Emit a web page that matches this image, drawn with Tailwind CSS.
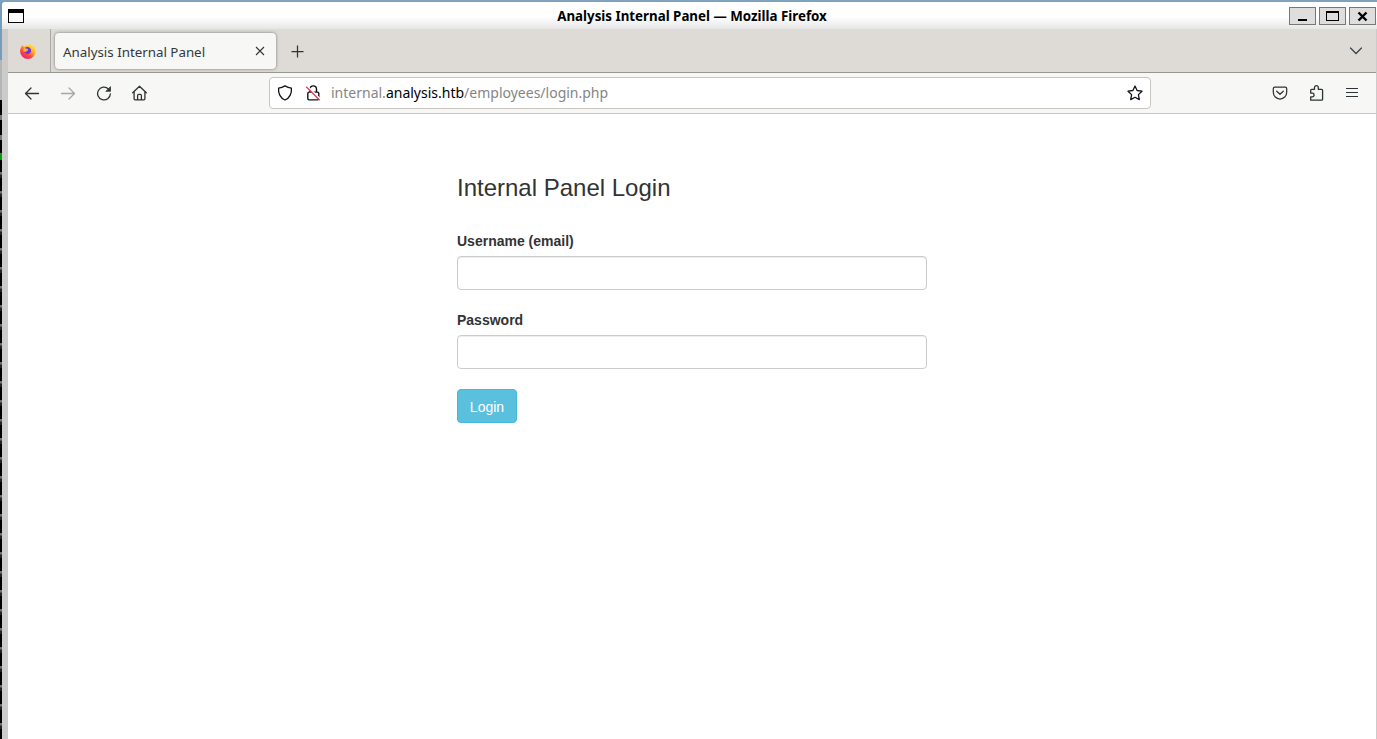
<!DOCTYPE html>
<html lang="en">
<head>
<meta charset="utf-8">
<title>Analysis Internal Panel</title>
<script src="https://cdn.jsdelivr.net/npm/@tailwindcss/browser@4"></script>
</head>
<body class="h-[739px] w-[1377px] overflow-hidden bg-[#7fa3be] pt-[2px] font-['Noto_Sans',sans-serif]">
<div class="flex h-[737px]">
  <!-- desktop and terminal visible beside the window -->
  <aside class="flex w-[2px] shrink-0 flex-col overflow-hidden bg-black">
    <div class="h-[58px] shrink-0 bg-[#759dbb]"></div>
    <div class="h-[40px] shrink-0 bg-[#b5b5b5]"></div>
    <div class="h-[53px] shrink-0 bg-[repeating-linear-gradient(to_bottom,#000_0px,#000_15px,#777_15px,#777_20px)]"></div>
    <div class="h-[7px] shrink-0 bg-[#0b9a0b]"></div>
    <div class="grow bg-[repeating-linear-gradient(to_bottom,#000_0px,#000_12px,#666_12px,#777_14px,#222_15px,#222_18px,#000_18px,#000_19px)]"></div>
  </aside>
  <div class="flex min-w-0 grow flex-col overflow-hidden rounded-tl-[3px] bg-[#cbcbcb]">
    <header class="flex h-[27px] shrink-0 items-center bg-linear-to-b from-white from-55% to-[#e6e6e6] pr-px pl-[6px]">
      <svg class="h-[14px] w-4" viewBox="0 0 16 14"><path d="M0 0h16v14H0z"/><path fill="#fff" d="M1 4h14v9H1z"/></svg>
      <h1 class="grow pt-[2px] pl-[71px] text-center text-[13.333px] leading-[25px] font-bold text-black">Analysis Internal Panel — Mozilla Firefox</h1>
      <div class="flex gap-[3px] pt-px">
        <div class="h-[18px] w-[27px] border border-[#777] bg-[#dedede]"><svg class="h-4 w-[25px]" viewBox="0 0 25 16"><path d="M8 11h9v2H8z"/></svg></div>
        <div class="h-[18px] w-[27px] border border-[#777] bg-[#dedede]"><svg class="h-4 w-[25px]" viewBox="0 0 25 16"><path fill-rule="evenodd" d="M6 3h13v10H6zM7 5v7h11V5z"/></svg></div>
        <div class="h-[18px] w-[27px] border border-[#777] bg-[#dedede]"><svg class="h-4 w-[25px]" viewBox="0 0 25 16"><path d="m8.500 4.500 8 8m0-8-8 8" stroke="#000" stroke-width="2.400"/></svg></div>
      </div>
    </header>
    <div class="mr-px ml-[6px] flex min-h-0 grow flex-col bg-white">
      <div class="flex h-11 shrink-0 border-b border-[#999692] bg-[#dedbd7]">
        <div class="flex w-[43px] items-center border-r border-[#aaa7a3] pl-[11px]">
          <svg class="h-[18px] w-[18px]" viewBox="0 0 18 18">
            <defs>
              <linearGradient id="flame" x1=".85" y1=".05" x2=".2" y2="1"><stop offset="0" stop-color="#fff044"/><stop offset=".35" stop-color="#ffb026"/><stop offset=".65" stop-color="#ff4a3d"/><stop offset="1" stop-color="#e8158b"/></linearGradient>
            </defs>
            <path fill="url(#flame)" d="M2.600 4.500 3.200 3l1.500 1.600 1.500-.2L7.600 2.800l1.200 1.500L11 1.500c1.300 1 2.500 2 3 3.200l.8-.5c1.100 1.500 1.700 3.100 1.700 5A7.700 7.700 0 0 1 1.100 9.400c0-2 .5-3.500 1.500-4.900z"/>
            <path fill="#6c35df" d="M6 6.400C7.500 4.200 10.700 5 11.700 7c1.200 2.700-.5 5-3.200 4.900-1.900 0-3.300-1.300-3.600-2.800l2.600.7 1.700-1.200-1.800-.7z"/>
            <path fill="#ffb52e" d="m5 5.700 1.800.9 2.300.3-.4 1.300-1.700.8-.4 1.200-2.400-1z"/>
          </svg>
        </div>
        <div class="mt-1 ml-1 flex h-9 w-[221px] items-center justify-between rounded bg-[#f7f7f5] pr-[10px] pl-2 shadow-[0_0_3px_rgba(0,0,0,.5)]">
          <span class="pt-[3px] text-[13.333px] text-[#33383a]">Analysis Internal Panel</span>
          <svg class="h-3 w-3" viewBox="0 0 12 12" fill="none" stroke="#33383a" stroke-width="1.100"><path d="m2 2 8 8m0-8-8 8"/></svg>
        </div>
        <svg class="mt-4 ml-[15px] h-[13px] w-[13px]" viewBox="0 0 13 13" fill="none" stroke="#2e3436" stroke-width="1.250"><path d="M6.500 .5v12M.5 6.500h12"/></svg>
        <svg class="mt-[17px] mr-[13px] ml-auto h-[10px] w-[14px]" viewBox="0 0 14 10" fill="none" stroke="#3c4446" stroke-width="1.300" stroke-linecap="round"><path d="m1.500 2 5.500 5.500L12.500 2"/></svg>
      </div>
      <nav class="flex h-[41px] shrink-0 items-center border-b border-[#cbc8c2] bg-[#f7f7f5] text-[#2e3436]">
        <svg class="ml-4 h-4 w-4" viewBox="0 0 16 16" fill="none" stroke="currentColor" stroke-width="1.300" stroke-linecap="round" stroke-linejoin="round"><path d="M14.500 8.500h-13M7 3 1.500 8.500 7 14"/></svg>
        <svg class="ml-5 h-4 w-4 opacity-40" viewBox="0 0 16 16" fill="none" stroke="currentColor" stroke-width="1.300" stroke-linecap="round" stroke-linejoin="round"><path d="M1.500 8.500h13M9 3l5.500 5.500L9 14"/></svg>
        <svg class="ml-5 h-4 w-4" viewBox="0 0 16 16" fill="none" stroke="currentColor" stroke-width="1.300" stroke-linecap="round" stroke-linejoin="round"><path d="M12.300 3.800A6.400 6.400 0 1 0 14.400 8.800"/><path fill="currentColor" d="M14.500 2v4.300h-4.300z" stroke-width=".8"/></svg>
        <svg class="ml-5 h-4 w-4" viewBox="0 0 16 16" fill="none" stroke="currentColor" stroke-width="1.300" stroke-linecap="round" stroke-linejoin="round"><path d="M.7 7.700 7.500 1.200l6.800 6.500M2.100 6.700v7.100q0 1 1 1h8.800q1 0 1-1V6.700M5.600 14.500v-4q0-1.200 1.200-1.200h1.400q1.200 0 1.200 1.200v4"/></svg>
        <div class="ml-[121px] flex h-8 w-[882px] items-center rounded border border-[#c8c5c0] bg-white px-[7px]">
          <svg class="h-4 w-4" viewBox="0 0 16 16" fill="none" stroke="#111" stroke-width="1.300" stroke-linejoin="round"><path d="M8 .9Q11 2.800 14.400 3.100C15 8.300 12.500 13.300 8 15 3.500 13.300 1 8.300 1.600 3.100Q5 2.800 8 .9z"/></svg>
          <svg class="ml-3 h-4 w-4" viewBox="0 0 16 16" fill="none" stroke="#111" stroke-width="1.400"><path d="M5 7V4.200C5 2.300 6.200.9 8.200.9s3.300 1.400 3.300 3.300V7"/><rect x="2.800" y="7.100" width="11" height="7.800" rx="1.300"/><path stroke="#fff" stroke-width="2" d="m2.200 1.200 13 13"/><path stroke="#ee3058" stroke-width="1.300" d="m1.200 1.800 13.500 13.500"/></svg>
          <span class="ml-[10px] pb-[2px] text-[14px] whitespace-nowrap text-[#858585]">internal.<span class="text-black">analysis.htb</span>/employees/login.php</span>
          <svg class="ml-auto h-4 w-4" viewBox="0 0 16 16" fill="none" stroke="#15141a" stroke-width="1.300" stroke-linejoin="round"><path d="m8 1 2.100 4.500 4.900.7-3.600 3.400.9 5L8 12.300l-4.300 2.300.9-5L1 6.200l4.900-.7z"/></svg>
        </div>
        <svg class="ml-[121px] h-4 w-4" viewBox="0 0 16 16" fill="none" stroke="currentColor" stroke-width="1.250" stroke-linecap="round" stroke-linejoin="round"><path d="M2.800 2.200h10.400q1.500 0 1.500 1.500v3.600a6.700 6.700 0 0 1-13.400 0V3.700q0-1.500 1.500-1.500zM4.700 6.200 8 9.300l3.300-3.100"/></svg>
        <svg class="ml-5 h-4 w-4" viewBox="0 0 16 16" fill="none" stroke="currentColor" stroke-width="1.300" stroke-linejoin="round"><path d="M2.700 15.200h11q.9 0 .9-.9V5.200q0-.9-.9-.9H10.300V2.600a1.900 1.900 0 0 0-3.800 0v1.700H3.600q-.9 0-.9.900v3h1.600a1.800 1.800 0 0 1 0 3.600H2.700z"/></svg>
        <svg class="ml-5 h-4 w-4" viewBox="0 0 16 16" stroke="currentColor" stroke-width="1.200"><path d="M2 3.500h12M2 7.500h12M2 11.500h12"/></svg>
      </nav>
      <main class="mx-auto w-[470px] grow pt-[61px] font-['Liberation_Sans',sans-serif] text-[14px] leading-5 text-[#333]">
        <h2 class="text-[24px] leading-[26px]">Internal Panel Login</h2>
        <form class="pt-[30px]">
          <label for="user" class="block font-bold">Username (email)</label>
          <input id="user" type="text" class="mt-[5px] block h-[34px] w-full rounded border border-[#ccc] bg-white px-3 shadow-[inset_0_1px_1px_rgba(0,0,0,.075)]">
          <label for="pass" class="mt-5 block font-bold">Password</label>
          <input id="pass" type="password" class="mt-[5px] block h-[34px] w-full rounded border border-[#ccc] bg-white px-3 shadow-[inset_0_1px_1px_rgba(0,0,0,.075)]">
          <button type="button" class="mt-5 block h-[34px] w-[60px] rounded border border-[#46b8da] bg-[#5bc0de] pt-px text-center text-white">Login</button>
        </form>
      </main>
    </div>
  </div>
</div>
</body>
</html>
